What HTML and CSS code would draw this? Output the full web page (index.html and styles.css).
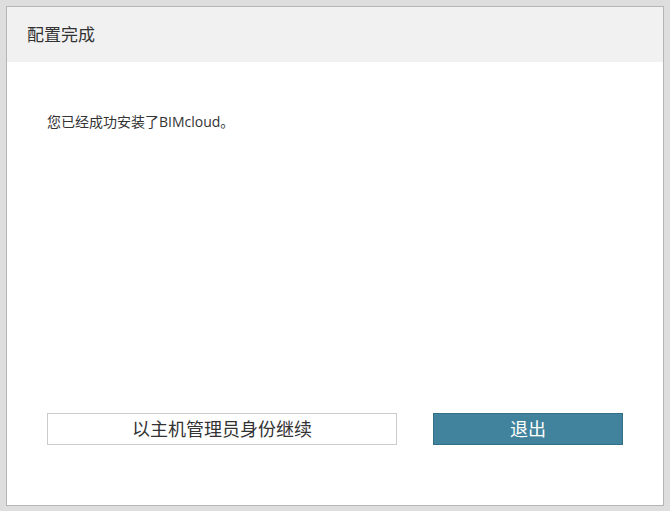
FILE: index.html
```html
<!DOCTYPE html>
<html lang="zh">

<head>
    <meta charset="UTF-8">
    <meta name="viewport" content="width=device-width, initial-scale=1.0">
    <link rel="stylesheet" href="styles.css">
    <title>配置完成</title>
</head>

<body>
    <div class="dialog">
        <div class="dialogHead">配置完成</div>
        <div class="dialogBody">
            <p class="message">您已经成功安装了BIMcloud。</p>
        </div>
        <div class="dialogFoot">
            <div class="btn btnGhost">以主机管理员身份继续</div>
            <div class="btn btnPrimary">退出</div>
        </div>
    </div>
</body>

</html>
```

FILE: styles.css
```css
* {
    padding: 0;
    margin: 0;
    box-sizing: border-box;
}

html,
body {
    height: 100%;
}

body {
    background: #dedede;
    padding: 6px;
    font-family: "Open Sans", "Noto Sans CJK SC", sans-serif;
    color: #333;
}

.dialog {
    width: 658px;
    height: 500px;
    background: #fff;
    border: 1px solid #b5b5b5;
    display: flex;
    flex-direction: column;
}

.dialogHead {
    height: 55px;
    background: #f1f1f1;
    padding-left: 20px;
    font-size: 17px;
    line-height: 55px;
    color: #333;
}

.dialogBody {
    flex: 1;
    padding: 51px 40px 0;
}

.message {
    font-size: 14px;
    line-height: 18px;
}

.dialogFoot {
    display: flex;
    justify-content: space-between;
    padding: 0 40px 60px;
}

.btn {
    height: 32px;
    line-height: 30px;
    font-size: 18px;
    text-align: center;
    cursor: pointer;
}

.btnGhost {
    width: 350px;
    border: 1px solid #cccccc;
    color: #333;
    background: #fff;
}

.btnPrimary {
    width: 190px;
    background: #41839d;
    border: 1px solid #336f86;
    color: #fff;
}
```
